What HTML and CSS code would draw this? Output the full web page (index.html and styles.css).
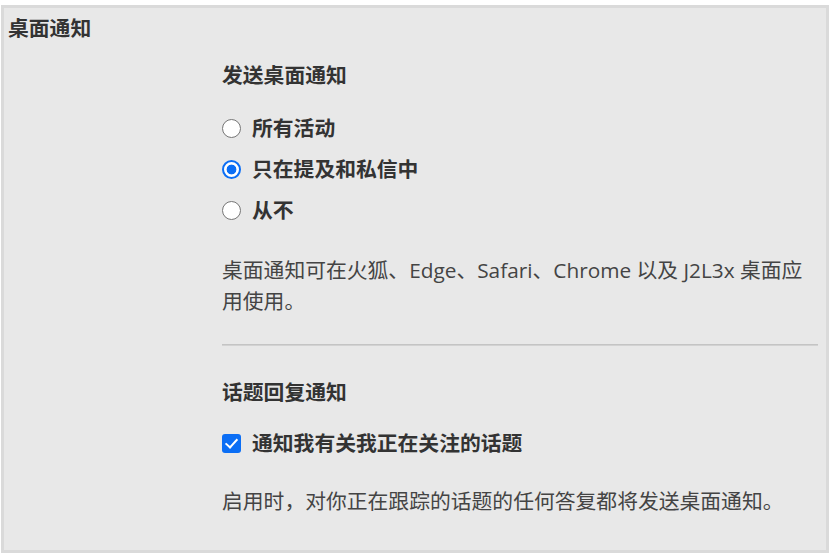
FILE: index.html
```html
<!DOCTYPE html>
<html lang="zh-CN">
<head>
<meta charset="utf-8">
<link rel="stylesheet" href="styles.css">
</head>
<body>
<div class="panel">
  <div class="title">桌面通知</div>
  <div class="content">
    <div class="heading first">发送桌面通知</div>
    <div class="options">
      <label class="option"><input class="radio" type="radio" name="notify"><span>所有活动</span></label>
      <label class="option"><input class="radio" type="radio" name="notify" checked><span>只在提及和私信中</span></label>
      <label class="option"><input class="radio" type="radio" name="notify"><span>从不</span></label>
    </div>
    <p class="desc">桌面通知可在火狐、Edge、Safari、Chrome 以及 J2L3x 桌面应用使用。</p>
    <hr class="divider">
    <div class="heading">话题回复通知</div>
    <label class="option check"><input class="box" type="checkbox" checked><span>通知我有关我正在关注的话题</span></label>
    <p class="desc last">启用时，对你正在跟踪的话题的任何答复都将发送桌面通知。</p>
  </div>
</div>
</body>
</html>
```

FILE: styles.css
```css
html, body {
  margin: 0;
  padding: 0;
  background: #ffffff;
}
body {
  font-family: "Open Sans", "Noto Sans CJK SC", sans-serif;
  font-size: 20.8px;
  line-height: 31px;
  color: #333333;
}
.panel {
  margin: 5px 3px 0 1px;
  border: 3px solid #dadada;
  background: #e8e8e8;
  padding: 5px 8px 32px 4px;
  height: 505px;
  box-sizing: content-box;
}
.title {
  font-weight: 700;
  color: #333333;
}
.content {
  margin-left: 214px;
  margin-top: 16px;
}
.heading {
  font-weight: 700;
  color: #333333;
}
.options {
  margin-top: 22px;
  display: flex;
  flex-direction: column;
  gap: 10px;
}
.option {
  display: flex;
  align-items: center;
  gap: 11px;
  font-weight: 700;
  color: #333333;
}
.radio {
  appearance: none;
  -webkit-appearance: none;
  margin: 0;
  width: 19px;
  height: 19px;
  flex: none;
  border-radius: 50%;
  border: 1.5px solid #767676;
  background: #ffffff;
  box-sizing: border-box;
}
.radio:checked {
  border: 2px solid #0b6ef5;
  background: radial-gradient(circle, #0b6ef5 0 4.6px, #ffffff 5.2px);
}
.box {
  appearance: none;
  -webkit-appearance: none;
  margin: 0;
  width: 19px;
  height: 19px;
  flex: none;
  border-radius: 3px;
  background: #0b6ef5;
  position: relative;
}
.box::after {
  content: "";
  position: absolute;
  left: 6px;
  top: 2px;
  width: 5px;
  height: 10px;
  border: solid #ffffff;
  border-width: 0 2.5px 2.5px 0;
  transform: rotate(42deg);
}
.check {
  margin-top: 20px;
}
.desc {
  margin: 29px 0 0 0;
  color: #444444;
}
.desc.last {
  margin-top: 27px;
}
.divider {
  margin: 27px 0 31px 0;
  border: 0;
  border-top: 1px solid #c4c4c4;
  border-bottom: 1px solid #d2d2d2;
  height: 0;
}
```
